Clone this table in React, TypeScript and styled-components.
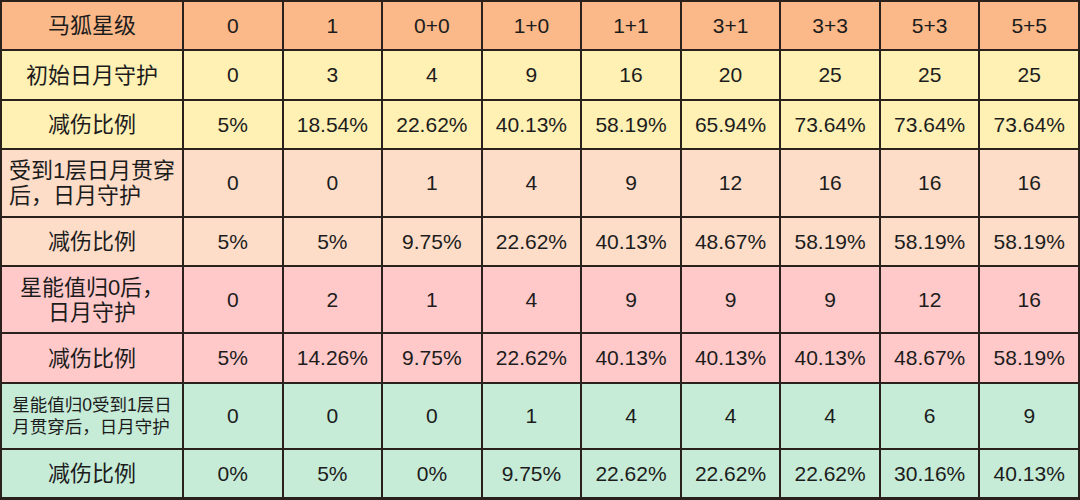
import React from "react";
import styled, { createGlobalStyle } from "styled-components";

const GlobalStyle = createGlobalStyle`
  html, body {
    margin: 0;
    padding: 0;
    background: #ffffff;
  }
  body {
    font-family: "Liberation Sans", "Noto Sans CJK SC", sans-serif;
    color: #1c1c1c;
  }
`;

type Tone = "head" | "yellow" | "peach" | "pink" | "green";

const tones: Record<Tone, string> = {
  head: "#fbb888",
  yellow: "#fff0b4",
  peach: "#fddcc8",
  pink: "#ffc9c9",
  green: "#c6ebd7",
};

interface RowData {
  label: React.ReactNode;
  tone: Tone;
  height: number;
  small?: boolean;
  left?: boolean;
  values: string[];
}

const rows: RowData[] = [
  {
    label: "马狐星级",
    tone: "head",
    height: 47,
    values: ["0", "1", "0+0", "1+0", "1+1", "3+1", "3+3", "5+3", "5+5"],
  },
  {
    label: "初始日月守护",
    tone: "yellow",
    height: 48,
    values: ["0", "3", "4", "9", "16", "20", "25", "25", "25"],
  },
  {
    label: "减伤比例",
    tone: "yellow",
    height: 47,
    values: ["5%", "18.54%", "22.62%", "40.13%", "58.19%", "65.94%", "73.64%", "73.64%", "73.64%"],
  },
  {
    label: (
      <>
        受到1层日月贯穿
        <br />
        后，日月守护
      </>
    ),
    tone: "peach",
    height: 66,
    left: true,
    values: ["0", "0", "1", "4", "9", "12", "16", "16", "16"],
  },
  {
    label: "减伤比例",
    tone: "peach",
    height: 47,
    values: ["5%", "5%", "9.75%", "22.62%", "40.13%", "48.67%", "58.19%", "58.19%", "58.19%"],
  },
  {
    label: (
      <>
        星能值归0后，
        <br />
        日月守护
      </>
    ),
    tone: "pink",
    height: 65,
    values: ["0", "2", "1", "4", "9", "9", "9", "12", "16"],
  },
  {
    label: "减伤比例",
    tone: "pink",
    height: 48,
    values: ["5%", "14.26%", "9.75%", "22.62%", "40.13%", "40.13%", "40.13%", "48.67%", "58.19%"],
  },
  {
    label: (
      <>
        星能值归0受到1层日
        <br />
        月贯穿后，日月守护
      </>
    ),
    tone: "green",
    height: 64,
    small: true,
    left: true,
    values: ["0", "0", "0", "1", "4", "4", "4", "6", "9"],
  },
  {
    label: "减伤比例",
    tone: "green",
    height: 47,
    values: ["0%", "5%", "0%", "9.75%", "22.62%", "22.62%", "22.62%", "30.16%", "40.13%"],
  },
];

const Grid = styled.div<{ $rows: string }>`
  width: 1080px;
  height: 500px;
  box-sizing: border-box;
  display: grid;
  grid-template-columns: 180px repeat(9, 1fr);
  grid-template-rows: ${(p) => p.$rows};
  gap: 2px;
  padding: 2px;
  background: #2a211d;
`;

const Cell = styled.div<{ $tone: Tone }>`
  background: ${(p) => tones[p.$tone]};
  display: flex;
  align-items: center;
  justify-content: center;
  text-align: center;
  font-size: 21px;
  line-height: 24px;
`;

const LabelCell = styled(Cell)<{ $small?: boolean }>`
  font-size: ${(p) => (p.$small ? "17.5px" : "22px")};
  line-height: ${(p) => (p.$small ? "22px" : "25px")};
  white-space: nowrap;
`;

const LabelText = styled.span<{ $left?: boolean }>`
  text-align: ${(p) => (p.$left ? "left" : "center")};
`;

const App = () => {
  const template = rows.map((r) => `${r.height}px`).join(" ");
  return (
    <>
      <GlobalStyle />
      <Grid $rows={template}>
        {rows.map((row, i) => (
          <React.Fragment key={i}>
            <LabelCell $tone={row.tone} $small={row.small}>
              <LabelText $left={row.left}>{row.label}</LabelText>
            </LabelCell>
            {row.values.map((v, j) => (
              <Cell $tone={row.tone} key={j}>
                {v}
              </Cell>
            ))}
          </React.Fragment>
        ))}
      </Grid>
    </>
  );
};

export default App;
